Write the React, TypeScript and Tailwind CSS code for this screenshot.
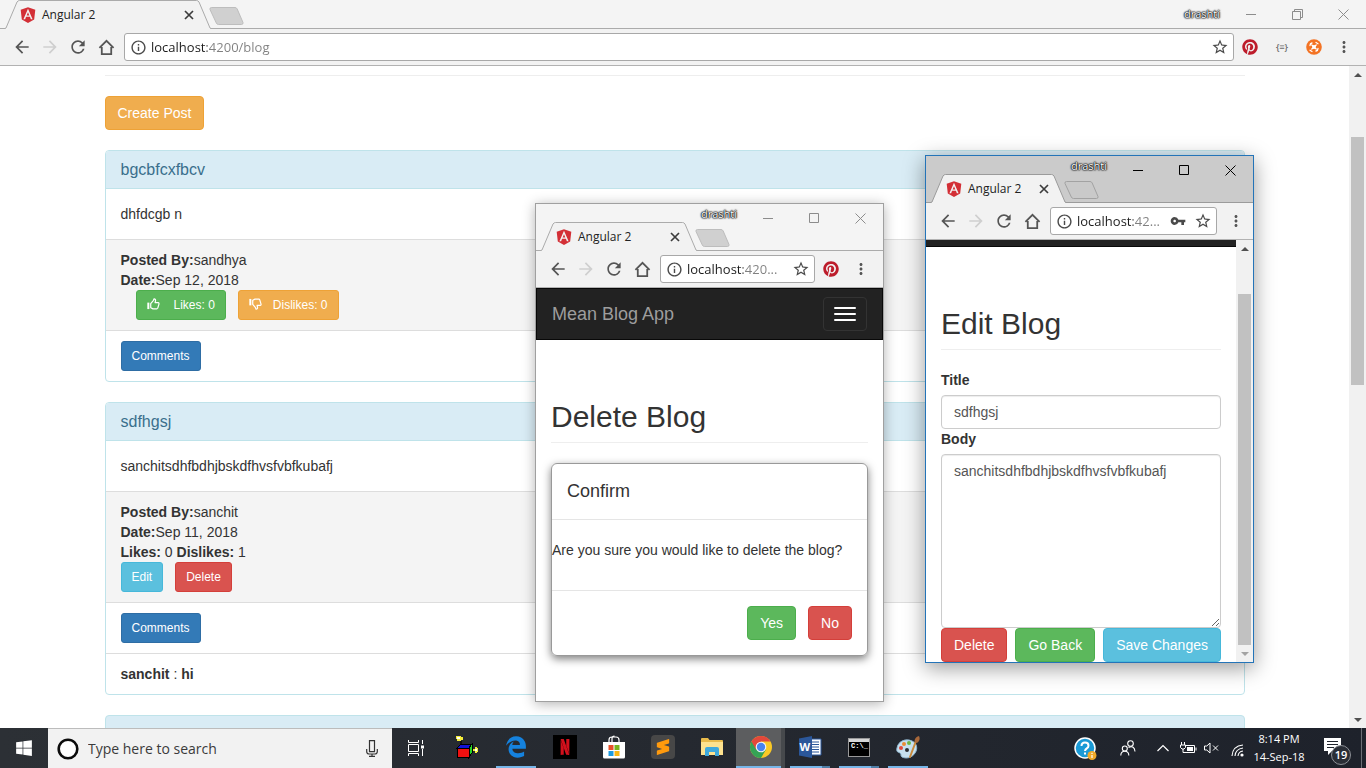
import React, { ReactNode } from "react";
import { FaAngular, FaEdgeLegacy, FaPinterest, FaWindows } from "react-icons/fa";
import {
  MdArrowBack,
  MdArrowForward,
  MdInfoOutline,
  MdMoreVert,
  MdRefresh,
  MdStarBorder,
  MdVpnKey,
} from "react-icons/md";
import { SiNetflix, SiSublimetext } from "react-icons/si";

/* ---------- Browser chrome ---------- */

function CaptionButtons({ active, maximized }: { active?: boolean; maximized?: boolean }) {
  const tone = active ? "text-black" : "text-[#8c8c8c]";
  return (
    <div className={`flex h-7 ${tone}`}>
      <button aria-label="Minimize" className="flex w-[46px] items-center justify-center">
        <svg width="11" height="11" viewBox="0 0 11 11" stroke="currentColor" fill="none">
          <path d="M0 5.5h10" />
        </svg>
      </button>
      <button aria-label="Maximize" className="flex w-[46px] items-center justify-center">
        <svg width="11" height="11" viewBox="0 0 11 11" stroke="currentColor" fill="none">
          {maximized ? <path d="M.5 2.500h8v8h-8zM2.500 2.500v-2h8v8h-2" /> : <path d="M.5 .5h9v9h-9z" />}
        </svg>
      </button>
      <button aria-label="Close window" className="flex w-[46px] items-center justify-center">
        <svg width="11" height="11" viewBox="0 0 11 11" stroke="currentColor" fill="none">
          <path d="M.5 .5l10 10M10.500 .5l-10 10" />
        </svg>
      </button>
    </div>
  );
}

function Tab({ width, line }: { width: number; line: string }) {
  return (
    <div className="relative h-[29px]" style={{ width }}>
      <svg className="absolute inset-0" width={width} height="29" viewBox={`0 0 ${width} 29`}>
        <path
          d={`M0 28.500 L1 28 L12 2 Q13 .5 14.500 .5 H${width - 14.5} Q${width - 13} .5 ${width - 12} 2 L${width - 1} 28 L${width} 29 H0 Z`}
          fill="#f2f2f2"
        />
        <path
          d={`M0 28.500 L1 28 L12 2 Q13 .5 14.500 .5 H${width - 14.5} Q${width - 13} .5 ${width - 12} 2 L${width - 1} 28 L${width} 28.500`}
          fill="none"
          stroke={line}
        />
      </svg>
      <div className="relative flex h-full items-center pr-4 pl-[14px]">
        <FaAngular className="size-[18px] text-[#d32f36]" />
        <span className="ml-[5px] flex-1 text-[12px] whitespace-nowrap text-[#222]">Angular 2</span>
        <button aria-label="Close tab" className="flex size-3 items-center justify-center">
          <svg width="10" height="10" viewBox="0 0 10 10" stroke="#3c3c3c" strokeWidth="1.7">
            <path d="M1 1l8 8M9 1l-8 8" />
          </svg>
        </button>
      </div>
    </div>
  );
}

function NewTab({ fill, line }: { fill: string; line: string }) {
  return (
    <button aria-label="New tab" className="-ml-0.5 flex h-[29px] items-center pt-0.5">
      <svg width="35" height="18" viewBox="0 0 35 18">
        <path d="M2.500 .5H26q1.500 0 2.200 1.500L34 15.500q.4 2-1.500 2H9.500q-1.500 0-2.200-1.500L1 2.500q-.5-2 1.500-2z" fill={fill} stroke={line} />
      </svg>
    </button>
  );
}

function HomeIcon() {
  return (
    <svg width="17" height="17" viewBox="0 0 18 18" fill="none" stroke="currentColor" strokeWidth="1.900">
      <path d="M1.500 9.500L9 2l7.500 7.500" />
      <path d="M4 8.500V16h10V8.500" />
    </svg>
  );
}

function AddressBar({ url, saved }: { url: string; saved?: boolean }) {
  return (
    <div className="ml-1 flex h-7 min-w-0 flex-1 items-center rounded-[3px] border border-[#a8a8a8] bg-white pr-1 pl-[5px] text-[#4a4a4a]">
      <MdInfoOutline className="size-[17px] shrink-0" />
      <input
        aria-label="Address"
        defaultValue={url}
        className="ml-1 h-6 min-w-0 flex-1 bg-linear-to-r from-[#1c1c1c] from-[56px] to-[#808080] to-[56px] bg-clip-text text-[13px] text-transparent outline-none"
      />
      {saved && (
        <button aria-label="Manage passwords" className="mr-2">
          <MdVpnKey className="size-4" />
        </button>
      )}
      <button aria-label="Bookmark this page">
        <MdStarBorder className="size-[18px]" />
      </button>
    </div>
  );
}

function Toolbar({
  url,
  saved,
  extensions,
}: {
  url: string;
  saved?: boolean;
  extensions?: ReactNode[];
}) {
  const slot = "flex w-7 shrink-0 items-center justify-center";
  return (
    <div
      className={`flex h-[37px] shrink-0 items-center border-b border-[#b2b2b2] bg-[#f2f2f2] pl-2 text-[#555] ${extensions ? "pr-2" : "pr-[3px]"}`}
    >
      <button aria-label="Back" className={slot}>
        <MdArrowBack className="size-5" />
      </button>
      <button aria-label="Forward" className={`${slot} text-[#cfcfcf]`}>
        <MdArrowForward className="size-5" />
      </button>
      <button aria-label="Reload" className={slot}>
        <MdRefresh className="size-5" />
      </button>
      <button aria-label="Home" className={slot}>
        <HomeIcon />
      </button>
      <AddressBar url={url} saved={saved} />
      {extensions ? (
        extensions.map((icon, i) => (
          <button key={i} aria-label={`Extension ${i + 1}`} className="flex w-8 shrink-0 items-center justify-center">
            {icon}
          </button>
        ))
      ) : (
        <span className="w-[5px]" />
      )}
      <button aria-label="Menu" className={slot}>
        <MdMoreVert className="size-[18px]" />
      </button>
    </div>
  );
}

function BrowserTop({
  tabWidth,
  active,
  maximized,
  ...bar
}: {
  tabWidth: number;
  active?: boolean;
  maximized?: boolean;
  url: string;
  saved?: boolean;
  extensions?: ReactNode[];
}) {
  const line = active ? "#9b9b9b" : "#ababab";
  return (
    <header className="shrink-0 font-['Open_Sans',sans-serif]">
      <div
        className={`grid ${maximized ? "h-[29px]" : "h-[47px]"} ${
          active ? "bg-[#cbcbcb] shadow-[inset_0_-1px_0_#9b9b9b]" : "bg-[#f4f4f4] shadow-[inset_0_-1px_0_#ababab]"
        }`}
      >
        <div className="col-start-1 row-start-1 flex self-end pl-[5px]">
          <Tab width={tabWidth} line={line} />
          <NewTab fill={active ? "#c9c9c9" : "#d0d0d0"} line={active ? "#a2a2a2" : "#bdbdbd"} />
        </div>
        <div className="col-start-1 row-start-1 flex self-start justify-self-end">
          <span
            className={`mr-2 text-[11px] text-white [text-shadow:0_0_1px_#000,0_0_1px_#000,0_0_2px_#000,0_0_2px_#000] ${
              maximized ? "leading-7" : "leading-5"
            }`}
          >
            drashti
          </span>
          <CaptionButtons active={active} maximized={maximized} />
        </div>
      </div>
      <Toolbar {...bar} />
    </header>
  );
}

function Scrollbar({ thumb, atEnd }: { thumb: string; atEnd?: boolean }) {
  return (
    <div aria-hidden="true" className="flex w-[17px] shrink-0 flex-col bg-[#f1f1f1]">
      <span className="flex h-[17px] items-center justify-center text-[#505050]">
        <svg width="8" height="4" viewBox="0 0 8 4" fill="currentColor">
          <path d="M0 4l4-4 4 4z" />
        </svg>
      </span>
      <div className="flex min-h-0 flex-1 flex-col px-0.5">
        <div className={`bg-[#c1c1c1] ${thumb}`} />
      </div>
      <span className={`flex h-[17px] items-center justify-center ${atEnd ? "text-[#a3a3a3]" : "text-[#505050]"}`}>
        <svg width="8" height="4" viewBox="0 0 8 4" fill="currentColor">
          <path d="M0 0l4 4 4-4z" />
        </svg>
      </span>
    </div>
  );
}

/* ---------- Page widgets ---------- */

const tones = {
  warning: "border-[#eea236] bg-[#f0ad4e]",
  success: "border-[#4cae4c] bg-[#5cb85c]",
  danger: "border-[#d43f3a] bg-[#d9534f]",
  info: "border-[#46b8da] bg-[#5bc0de]",
  primary: "border-[#2e6da4] bg-[#337ab7]",
};

function Button({ tone, small, children }: { tone: keyof typeof tones; small?: boolean; children: ReactNode }) {
  return (
    <button
      type="button"
      className={`inline-flex items-center border text-white ${tones[tone]} ${
        small ? "h-[30px] rounded-[3px] px-2.5 text-[12px]" : "h-[34px] rounded px-3 text-[14px]"
      }`}
    >
      {children}
    </button>
  );
}

function ThumbIcon({ down }: { down?: boolean }) {
  return (
    <svg
      width="13"
      height="12"
      viewBox="0 0 14 13"
      fill="none"
      stroke="currentColor"
      strokeWidth="1.300"
      strokeLinejoin="round"
      className={`mb-0.5 ${down ? "mr-[11px] -scale-y-100" : "mr-3.5"}`}
    >
      <path d="M.3 5h2.200v7H.3z" fill="currentColor" stroke="none" />
      <path d="M4 6l3-3.500L7.500 1q2-.2 1.700 2L8.700 5h3.500q1 .3 .8 1.300L11.600 11q-.3 .8-1 .8H6.500L4 10.500z" />
    </svg>
  );
}

function PageTitle({ children }: { children: ReactNode }) {
  return <h1 className="mb-5 border-b border-[#eee] pb-[9px] text-[30px] leading-[33px]">{children}</h1>;
}

type Post = {
  title: string;
  body: string;
  author: string;
  date: string;
  votes?: [number, number];
  own?: boolean;
  comment?: { by: string; text: string };
};

const posts: Post[] = [
  { title: "bgcbfcxfbcv", body: "dhfdcgb n", author: "sandhya", date: "Sep 12, 2018" },
  {
    title: "sdfhgsj",
    body: "sanchitsdhfbdhjbskdfhvsfvbfkubafj",
    author: "sanchit",
    date: "Sep 11, 2018",
    votes: [0, 1],
    own: true,
    comment: { by: "sanchit", text: "hi" },
  },
];

function PostCard({ post }: { post: Post }) {
  return (
    <article className="mb-5 rounded border border-[#bfe3ea] bg-white">
      <h3 className="rounded-t-[3px] border-b border-[#bfe3ea] bg-[#d9ecf5] px-[15px] py-2.5 text-[16px] leading-[17px] text-[#3a6f8c]">
        {post.title}
      </h3>
      <p className="p-[15px]">{post.body}</p>
      <div className="border-t border-[#ddd] bg-[#f4f4f4] px-[15px] py-2.5">
        <p>
          <strong>Posted By:</strong>
          {post.author}
        </p>
        <p>
          <strong>Date:</strong>
          {post.date}
        </p>
        {post.votes && (
          <p>
            <strong>Likes:</strong> {post.votes[0]} <strong>Dislikes:</strong> {post.votes[1]}
          </p>
        )}
        {post.own ? (
          <div className="flex gap-3">
            <Button tone="info" small>
              Edit
            </Button>
            <Button tone="danger" small>
              Delete
            </Button>
          </div>
        ) : (
          <div className="ml-[15px] flex gap-3">
            <Button tone="success" small>
              <ThumbIcon />
              Likes: 0
            </Button>
            <Button tone="warning" small>
              <ThumbIcon down />
              Dislikes: 0
            </Button>
          </div>
        )}
      </div>
      <div className="border-t border-[#ddd] px-[15px] py-2.5">
        <Button tone="primary" small>
          Comments
        </Button>
      </div>
      {post.comment && (
        <p className="border-t border-[#ddd] px-[15px] py-2.5">
          <strong>{post.comment.by}</strong> : <strong>{post.comment.text}</strong>
        </p>
      )}
    </article>
  );
}

/* ---------- Windows ---------- */

const pageText = "font-['Liberation_Sans',Arial,sans-serif] text-[14px] leading-5 text-[#333]";

const pinterest = <FaPinterest className="size-4 text-[#bd1c2b]" />;
const orangeBadge = (
  <svg width="16" height="16" viewBox="0 0 16 16">
    <circle cx="8" cy="8" r="7.800" fill="#f37324" />
    <g stroke="#fff" strokeWidth="1.300" strokeLinecap="round" fill="none">
      <path d="M4 6.500q0-2 2-2.500M10 3.500l2 1.200M4 11.300l2 1.200M12 9.500q0 2-2 2.500" />
      <path d="M5.800 6l4.400 4M10.200 6l-4.400 4" />
    </g>
    <circle cx="8" cy="8" r="2" fill="#fff" />
  </svg>
);

function BlogWindow() {
  return (
    <section className="flex min-h-0 flex-1 flex-col">
      <BrowserTop
        maximized
        tabWidth={206}
        url="localhost:4200/blog"
        extensions={[
          pinterest,
          <span key="braces" className="text-[9px] font-semibold text-[#6b6b6b]">{"{≡}"}</span>,
          orangeBadge,
        ]}
      />
      <div className="flex min-h-0 flex-1 bg-white">
        <main className={`min-w-0 flex-1 overflow-hidden ${pageText}`}>
          <div className="mx-auto max-w-[1170px] px-[15px] pt-[9px]">
            <hr className="mb-5 border-[#eee]" />
            <div className="mb-5 flex">
              <Button tone="warning">Create Post</Button>
            </div>
            {posts.map((post) => (
              <PostCard key={post.title} post={post} />
            ))}
            <div className="h-[38px] rounded-t border border-[#bfe3ea] bg-[#d9ecf5]" />
          </div>
        </main>
        <Scrollbar thumb="mt-[54px] h-[248px]" />
      </div>
    </section>
  );
}

function DeleteWindow() {
  return (
    <section className="absolute top-[203px] left-[535px] flex h-[499px] w-[349px] flex-col border border-[#a0a0a0] bg-white shadow-[0_2px_12px_rgba(0,0,0,0.3)]">
      <BrowserTop tabWidth={156} url="localhost:420..." extensions={[pinterest]} />
      <div className={`min-h-0 flex-1 overflow-hidden ${pageText}`}>
        <nav className="flex h-[52px] items-center justify-between border border-[#080808] bg-[#222] px-[15px]">
          <a href="#" className="text-[18px] text-[#9d9d9d]">
            Mean Blog App
          </a>
          <button
            aria-label="Toggle navigation"
            className="flex h-[34px] w-11 flex-col items-center justify-center gap-1 rounded border border-[#333]"
          >
            <span className="h-0.5 w-[22px] rounded-[1px] bg-white" />
            <span className="h-0.5 w-[22px] rounded-[1px] bg-white" />
            <span className="h-0.5 w-[22px] rounded-[1px] bg-white" />
          </button>
        </nav>
        <div className="px-[15px] pt-[60px]">
          <PageTitle>Delete Blog</PageTitle>
          <div role="dialog" aria-label="Confirm" className="rounded-md border border-[#999] shadow-[0_3px_9px_rgba(0,0,0,0.5)]">
            <h4 className="border-b border-[#e5e5e5] p-[15px] text-[18px] leading-[25px]">Confirm</h4>
            <p className="pt-5 pb-[30px]">Are you sure you would like to delete the blog?</p>
            <div className="flex justify-end gap-3 border-t border-[#e5e5e5] p-[15px]">
              <Button tone="success">Yes</Button>
              <Button tone="danger">No</Button>
            </div>
          </div>
        </div>
      </div>
    </section>
  );
}

function EditWindow() {
  const field = "block w-full rounded border border-[#ccc] bg-white px-3 py-1.5 text-[#555] shadow-[inset_0_1px_1px_rgba(0,0,0,0.075)]";
  return (
    <section className="absolute top-[155px] left-[925px] flex h-[508px] w-[329px] flex-col border border-[#2474b8] bg-white shadow-[0_5px_20px_rgba(0,0,0,0.4)]">
      <BrowserTop active tabWidth={135} url="localhost:42..." saved />
      <div className="flex min-h-0 flex-1">
        <div className={`min-w-0 flex-1 overflow-hidden ${pageText}`}>
          <div className="h-[7px] border-b border-[#080808] bg-[#222]" />
          <form className="px-[15px] pt-[60px]">
            <PageTitle>Edit Blog</PageTitle>
            <label htmlFor="title" className="mb-[5px] block font-bold">
              Title
            </label>
            <input id="title" defaultValue="sdfhgsj" className={`h-[34px] ${field}`} />
            <label htmlFor="body" className="mb-[5px] block font-bold">
              Body
            </label>
            <textarea id="body" rows={8} defaultValue="sanchitsdhfbdhjbskdfhvsfvbfkubafj" className={field} />
            <div className="flex justify-between">
              <Button tone="danger">Delete</Button>
              <Button tone="success">Go Back</Button>
              <Button tone="info">Save Changes</Button>
            </div>
          </form>
        </div>
        <Scrollbar thumb="mt-[37px] flex-1" atEnd />
      </div>
    </section>
  );
}

/* ---------- Taskbar ---------- */

function TaskViewIcon() {
  return (
    <svg width="17" height="16" viewBox="0 0 17 16" fill="none" stroke="#fff">
      <path d="M.5 0v2.500h10V0M.5 16v-2.500h10V16M.5 4.500h10v7H.5zM14.500 0v4M14.500 9v7" />
      <path d="M13 5.500h3v3h-3z" fill="#fff" stroke="none" />
    </svg>
  );
}

function ToyIcon() {
  return (
    <svg width="24" height="24" viewBox="0 0 24 24" shapeRendering="crispEdges">
      <path d="M6 6v5" stroke="#111" strokeWidth="2" />
      <path d="M1 1h5v1h2v3H6v1H2V4H1z" fill="#f5ee3a" />
      <path d="M2 2h3v2H2z" fill="#fff" />
      <path d="M6 9h11l-3 4H2z" fill="#1212d8" stroke="#000" />
      <path d="M2 13h12v9H2z" fill="#f01010" stroke="#000" />
      <path d="M14 13l3-4v9l-3 4z" fill="#28d428" stroke="#000" />
      <path d="M18 14h2v-2h2v1h1v4h-1v1h-2v-2h-2z" fill="#f5ee3a" />
      <path d="M20 14h2v2h-2z" fill="#fff" />
    </svg>
  );
}

function StoreIcon() {
  return (
    <svg width="24" height="24" viewBox="0 0 24 24">
      <path d="M7 8V5q0-3 3-3h4q3 0 3 3v3M10 8V4q0-3 2.500-3" fill="none" stroke="#fff" strokeWidth="1.200" />
      <path d="M1 7h22v15q0 1.500-1.500 1.500h-19Q1 23.500 1 22z" fill="#fff" />
      <path d="M6.500 10h5v5h-5z" fill="#e8502a" />
      <path d="M12.500 10h5v5h-5z" fill="#7ab51d" />
      <path d="M6.500 16h5v5h-5z" fill="#1e9be0" />
      <path d="M12.500 16h5v5h-5z" fill="#f9b716" />
    </svg>
  );
}

function FolderIcon() {
  return (
    <svg width="24" height="20" viewBox="0 0 24 20">
      <path d="M1 2q0-1 1-1h6l1.500 2H22q1 0 1 1v14H1z" fill="#e9bb4b" />
      <path d="M1 5h22v13H1z" fill="#fde28f" />
      <path d="M5 19v-7q0-2 2-2h10q2 0 2 2v7h-4v-4H9v4z" fill="#3fa9dc" />
    </svg>
  );
}

function ChromeIcon() {
  return (
    <svg width="24" height="24" viewBox="0 0 24 24">
      <circle cx="12" cy="12" r="11" fill="#fbc926" />
      <path d="M12 12L2.470 6.500A11 11 0 0 0 12 23l5-8.500z" fill="#35a355" />
      <path d="M2.470 6.500A11 11 0 0 1 21.530 6.500H12L7.200 14.700z" fill="#e2483b" />
      <circle cx="12" cy="12" r="5.300" fill="#f5f5f5" />
      <circle cx="12" cy="12" r="4.200" fill="#4a83ee" />
    </svg>
  );
}

function WordIcon() {
  return (
    <span className="relative flex">
      <svg width="24" height="22" viewBox="0 0 24 22">
        <path d="M12 3h11v16H12z" fill="#fff" stroke="#2b579a" />
        <path d="M14 6h7M14 8.500h7M14 11h7M14 13.500h7M14 16h7" stroke="#2b579a" />
        <path d="M1 2.500L14 0v22L1 19.500z" fill="#2b579a" />
      </svg>
      <span className="absolute inset-y-0 left-0.5 flex items-center text-[11px] font-bold text-white">W</span>
    </span>
  );
}

function PromptIcon() {
  return (
    <span className="flex h-[19px] w-[22px] flex-col border border-[#999] bg-black">
      <span className="h-[3px] bg-[#d6d6d6]" />
      <span className="pl-0.5 font-['Liberation_Mono',monospace] text-[7px] leading-[9px] font-bold whitespace-nowrap text-white">
        C:\_
      </span>
    </span>
  );
}

function PaintIcon() {
  return (
    <svg width="26" height="25" viewBox="0 0 26 25">
      <path d="M2 13C3 6 11 3 17 6c5 2 6 8 3 12-3 5-9 6-13 4-2-1 0-3-2-4s-4-1-3-5z" fill="#c6e0ef" stroke="#8fb6cf" />
      <circle cx="6" cy="13" r="2" fill="#e0483a" />
      <circle cx="9" cy="9" r="2" fill="#e98b35" />
      <circle cx="14" cy="8" r="2" fill="#6cb544" />
      <circle cx="12" cy="15" r="2" fill="#2b2e33" />
      <path d="M21 6L15 22" stroke="#c98a3c" strokeWidth="2" strokeLinecap="round" />
      <path d="M19.500 7q0-5 4.500-6 2 4-2 7z" fill="#a8683a" />
    </svg>
  );
}

type TaskbarApp = { name: string; icon: ReactNode; open?: boolean; current?: boolean; stacked?: boolean };

const apps: TaskbarApp[] = [
  { name: "Toy box", icon: <ToyIcon /> },
  { name: "Edge", icon: <FaEdgeLegacy className="size-[22px] text-[#1582de]" />, open: true },
  {
    name: "Netflix",
    icon: (
      <span className="flex size-6 items-center justify-center bg-black">
        <SiNetflix className="size-4 text-[#d3101c]" />
      </span>
    ),
  },
  { name: "Store", icon: <StoreIcon /> },
  {
    name: "Sublime Text",
    icon: (
      <span className="flex size-6 items-center justify-center rounded-sm bg-[#474747]">
        <SiSublimetext className="size-4 text-[#ff9a0d]" />
      </span>
    ),
  },
  { name: "Files", icon: <FolderIcon /> },
  { name: "Chrome", icon: <ChromeIcon />, current: true },
  { name: "Word", icon: <WordIcon />, open: true, stacked: true },
  { name: "Command prompt", icon: <PromptIcon />, open: true, stacked: true },
  { name: "Paint", icon: <PaintIcon />, open: true },
];

function Taskbar() {
  const traySlot = "flex h-full items-center justify-center";
  return (
    <footer className="flex h-10 shrink-0 bg-linear-to-r from-[#2c3035] to-[#1e222b] font-['Open_Sans',sans-serif] text-white">
      <button aria-label="Start" className="flex w-12 shrink-0 items-center justify-center">
        <FaWindows className="size-[18px]" />
      </button>
      <div className="flex w-[344px] items-center border-t border-[#bcbcbc] bg-[#f2f2f2] pr-3.5 pl-[9px]">
        <svg width="22" height="22" viewBox="0 0 22 22">
          <circle cx="11" cy="11" r="9.300" fill="#fff" stroke="#0c0c0c" strokeWidth="2.600" />
        </svg>
        <input
          aria-label="Search"
          placeholder="Type here to search"
          className="ml-[9px] min-w-0 flex-1 bg-transparent text-[14px] text-[#333] outline-none placeholder:text-[#3b3b3b]"
        />
        <button aria-label="Voice search">
          <svg width="12" height="17" viewBox="0 0 12 17" fill="none" stroke="#333" strokeWidth="1.200">
            <path d="M3.500 .7h5v11h-5zM.7 9v2.500q0 2.500 2.500 2.500h5.600q2.500 0 2.500-2.500V9M6 14v2M3 16.300h6" />
          </svg>
        </button>
      </div>
      <button aria-label="Task view" className="flex w-[50px] items-center justify-center pr-0.5">
        <TaskViewIcon />
      </button>
      {apps.map((app) => (
        <button
          key={app.name}
          aria-label={app.name}
          className={`flex w-[49px] flex-col items-center ${app.current ? "border-r-4 border-[#46494c] bg-[#5c5d5f]" : ""}`}
        >
          <span className={`flex min-h-0 flex-1 items-center ${app.current ? "pl-1" : ""}`}>{app.icon}</span>
          <span className={`flex h-0.5 ${app.current ? "w-full" : "w-10"} ${app.open || app.current ? "bg-[#76b5e8]" : ""}`}>
            {app.stacked && <span className="ml-auto w-2 bg-[#4f7ea6]" />}
          </span>
        </button>
      ))}
      <div className="ml-auto flex shrink-0">
        <button aria-label="Help" className={`${traySlot} w-11`}>
          <svg width="23" height="23" viewBox="0 0 23 23">
            <circle cx="11" cy="11" r="10" fill="#1a9ad6" stroke="#fff" strokeWidth="1.500" />
            <path d="M7.500 9q0-3.500 3.500-3.500T14.500 8.700q0 1.500-1.700 2.700T11 14M11 15.500v2" fill="none" stroke="#fff" strokeWidth="2" />
            <circle cx="18" cy="18.500" r="4.500" fill="#efa928" />
            <path d="M18 15.800v1.200M18 18v3" stroke="#fff" strokeWidth="1.200" />
          </svg>
        </button>
        <button aria-label="People" className={`${traySlot} w-[42px]`}>
          <svg width="16" height="16" viewBox="0 0 16 16" fill="none" stroke="#fff" strokeWidth="1.100">
            <circle cx="10.500" cy="3.500" r="2.800" />
            <circle cx="4.800" cy="8.500" r="2.500" />
            <path d="M.8 15.500q0-4.300 4-4.300t4 4.300M8.500 7.500q6-2.500 6.500 4" />
          </svg>
        </button>
        <button aria-label="Show hidden icons" className={`${traySlot} w-7`}>
          <svg width="12" height="8" viewBox="0 0 12 8" fill="none" stroke="#fff" strokeWidth="1.200">
            <path d="M.5 7L6 1.500 11.500 7" />
          </svg>
        </button>
        <button aria-label="Battery" className={`${traySlot} w-[22px]`}>
          <svg width="17" height="13" viewBox="0 0 17 13" fill="none" stroke="#fff">
            <path d="M5 3.500h9.500v7H5" />
            <path d="M7 5h6v4H7z" fill="#fff" stroke="none" />
            <path d="M16 5.500v3M1.500 0v3M4.500 0v3M.5 3h5v2.500L4 7H2L.5 5.500zM3 7v3.500h3" />
          </svg>
        </button>
        <button aria-label="Volume muted" className={`${traySlot} w-6`}>
          <svg width="15" height="12" viewBox="0 0 15 12" fill="none" stroke="#fff">
            <path d="M.5 4h2.300L6 1v10L2.800 8H.5zM9 3.500l5 5M14 3.500l-5 5" />
          </svg>
        </button>
        <button aria-label="Network" className={`${traySlot} w-7 pt-1`}>
          <svg width="13" height="13" viewBox="0 0 13 13" fill="none" stroke="#fff" strokeWidth="1.100">
            <path d="M1 12Q1.500 2 12 1M4 12Q4.500 5 12 4M7 12Q7.500 7.500 12 7" />
            <circle cx="11" cy="11" r="1.600" fill="#fff" stroke="none" />
          </svg>
        </button>
        <div className="flex w-14 flex-col items-center justify-center text-[11px] leading-[18px] whitespace-nowrap">
          <span>8:14 PM</span>
          <span>14-Sep-18</span>
        </div>
        <button aria-label="Notifications" className={`${traySlot} relative w-[54px]`}>
          <svg width="17" height="17" viewBox="0 0 17 17" className="mr-1 mb-1">
            <path d="M0 0h17v13H8l-4 4v-4H0z" fill="#fff" />
            <path d="M3 3.500h11M3 6.500h11M3 9.500h7" stroke="#20242c" />
          </svg>
          <span className="absolute top-[17px] left-6 flex size-5 items-center justify-center rounded-full border border-[#8d9096] bg-[#2a2e36] text-[11px] font-semibold">
            19
          </span>
        </button>
        <span className="w-[5px] border-l border-[#6b6e75]" />
      </div>
    </footer>
  );
}

export default function App() {
  return (
    <div className="relative flex h-screen flex-col overflow-hidden bg-white">
      <BlogWindow />
      <DeleteWindow />
      <EditWindow />
      <Taskbar />
    </div>
  );
}
